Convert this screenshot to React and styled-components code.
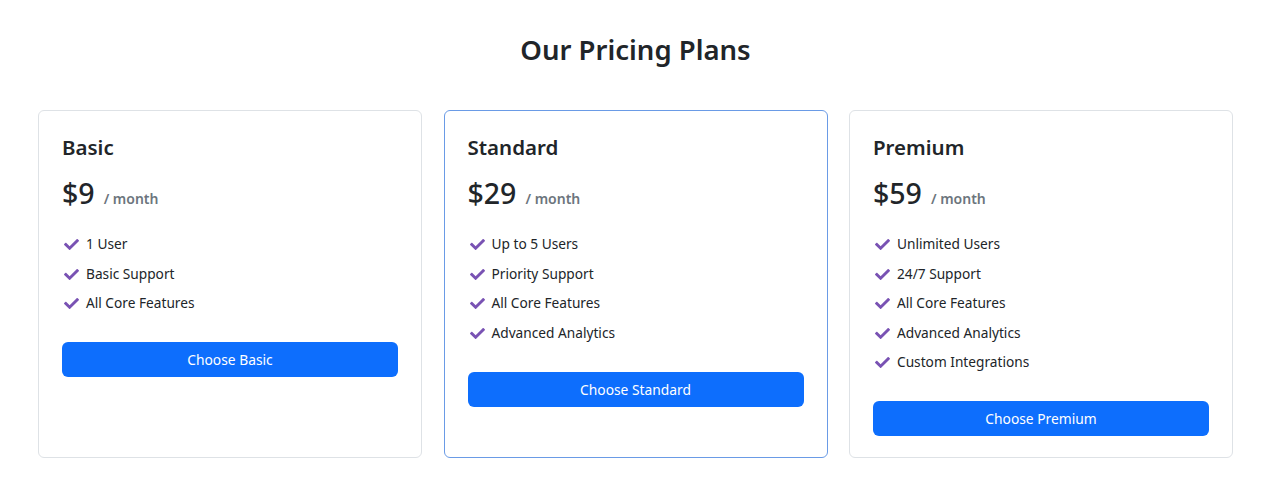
import styled, { createGlobalStyle } from "styled-components";
import { FaCheck } from "react-icons/fa";

const GlobalStyle = createGlobalStyle`
    body {
        margin: 0;
        background: #fff;
        color: #212529;
        font-family: "Noto Sans", "Open Sans", sans-serif;
    }
`;

const Page = styled.div`
    padding: 28px 47px 36px 38px;
`;

const Heading = styled.h2`
    margin: 0 0 38px;
    text-align: center;
    font-size: 27.5px;
    font-weight: 600;
    line-height: 44px;
`;

const Grid = styled.div`
    display: grid;
    grid-template-columns: repeat(3, 384px);
    gap: 21.5px;
    align-items: stretch;
`;

const Card = styled.div`
    border: 1px solid ${(p) => (p.featured ? "#6a9be6" : "#dee2e6")};
    border-radius: 6px;
    padding: 21px 23px 21px;
`;

const PlanName = styled.h4`
    margin: 0 0 11px;
    font-size: 20.5px;
    font-weight: 600;
    line-height: 30px;
`;

const Price = styled.div`
    display: flex;
    align-items: baseline;
    gap: 9px;
    margin-bottom: 14px;
    font-size: 28.5px;
    line-height: 40px;
    font-weight: 500;
`;

const Per = styled.span`
    font-size: 14px;
    font-weight: 600;
    color: #6c757d;
`;

const Features = styled.ul`
    list-style: none;
    margin: 0 0 29px;
    padding: 0;
`;

const Feature = styled.li`
    display: flex;
    align-items: center;
    gap: 7px;
    font-size: 13.7px;
    line-height: 21px;
    margin-bottom: 8.5px;
    color: #212529;
    svg {
        color: #7952b3;
        width: 15px;
        height: 15px;
        flex-shrink: 0;
        margin: 2px 0 0 2px;
    }
`;

const ChooseButton = styled.button`
    display: block;
    width: 100%;
    height: 35px;
    border: none;
    border-radius: 6px;
    background: #0d6efd;
    color: #fff;
    font-family: inherit;
    font-size: 13.8px;
    cursor: pointer;
`;

const plans = [
    { name: "Basic", price: 9, features: ["1 User", "Basic Support", "All Core Features"] },
    { name: "Standard", price: 29, featured: true, features: ["Up to 5 Users", "Priority Support", "All Core Features", "Advanced Analytics"] },
    { name: "Premium", price: 59, features: ["Unlimited Users", "24/7 Support", "All Core Features", "Advanced Analytics", "Custom Integrations"] },
];

export default function App() {
    return (
        <>
            <GlobalStyle />
            <Page>
                <Heading>Our Pricing Plans</Heading>
                <Grid>
                    {plans.map((plan) => (
                        <Card key={plan.name} featured={plan.featured ? 1 : 0}>
                            <PlanName>{plan.name}</PlanName>
                            <Price>
                                ${plan.price}
                                <Per>/ month</Per>
                            </Price>
                            <Features>
                                {plan.features.map((f) => (
                                    <Feature key={f}>
                                        <FaCheck />
                                        {f}
                                    </Feature>
                                ))}
                            </Features>
                            <ChooseButton>Choose {plan.name}</ChooseButton>
                        </Card>
                    ))}
                </Grid>
            </Page>
        </>
    );
}
